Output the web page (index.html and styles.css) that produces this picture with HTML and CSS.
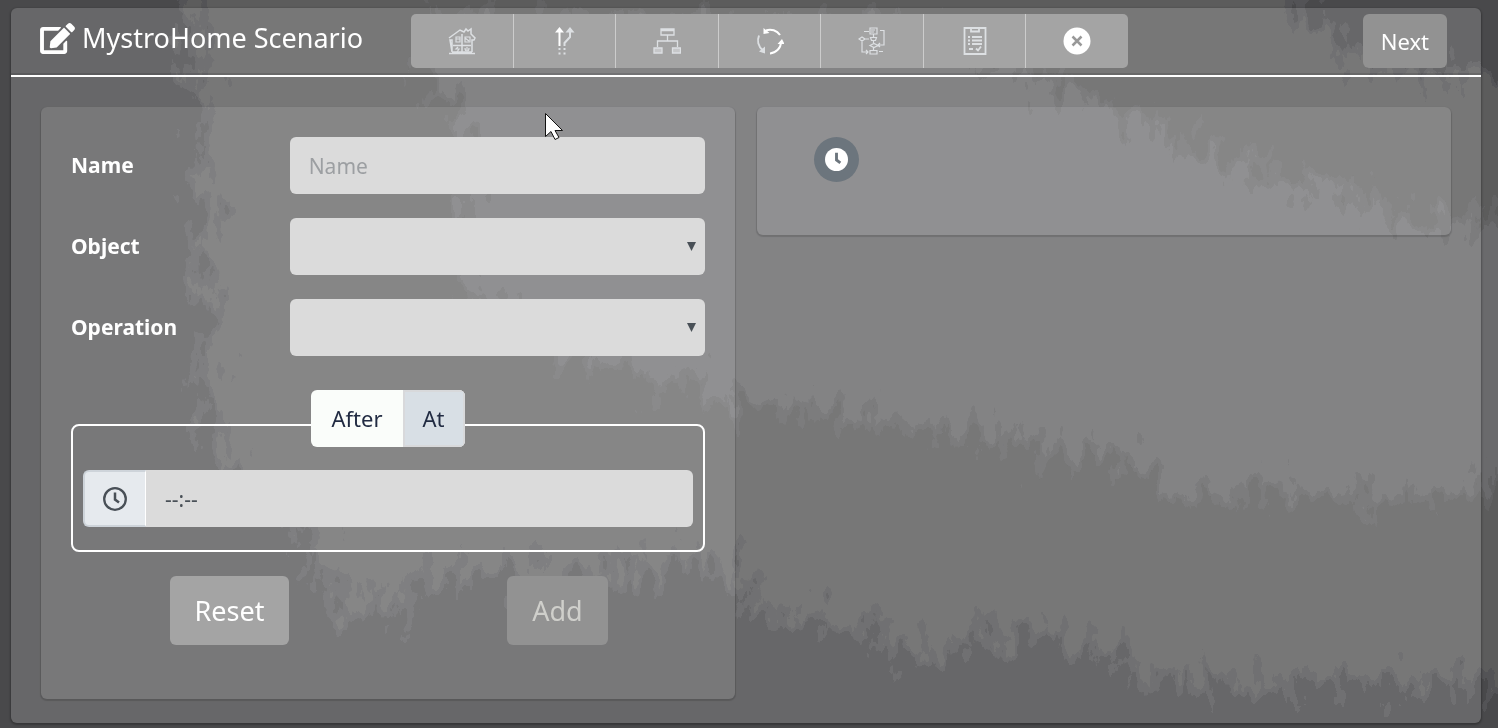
FILE: index.html
```html
<!DOCTYPE html>
<html lang="en">
<head>
<meta charset="utf-8">
<title>MystroHome Scenario</title>
<link rel="stylesheet" href="styles.css">
</head>
<body>
<svg class="backdrop" viewBox="0 0 1498 728" preserveAspectRatio="none" aria-hidden="true">
  <defs>
    <filter id="ragged" x="-5%" y="-5%" width="110%" height="110%">
      <feTurbulence type="fractalNoise" baseFrequency="0.06 0.03" numOctaves="4" seed="7" result="n"/>
      <feDisplacementMap in="SourceGraphic" in2="n" scale="90" xChannelSelector="R" yChannelSelector="G"/>
    </filter>
  </defs>
  <rect width="1498" height="728" fill="#49494b"/>
  <g filter="url(#ragged)" stroke-width="14">
    <path fill="#5b5b5b" stroke="#535356" d="M185-60 200 100 208 240 205 400 235 490 310 525 335 610 400 615 425 575 560 575 720 560 760 610 860 625 920 660 1000 632 1090 645 1150 680 1250 685 1560 685V75H1440L1370 60 1320 30 1270-60Z"/>
    <path fill="#6a6a6c" stroke="#626264" d="M465 110 430 90 440 25 900 30 1050 80 1130 115 1200 150 1320 190 1450 225 1560 200V480L1380 500 1290 490 1180 500 1140 465 1060 450 980 435 860 415 740 410 690 385 610 370 530 330 465 290Z"/>
  </g>
</svg>

<div class="shell">
  <header class="bar">
    <h1 class="title">
      <svg class="edit" viewBox="0 0 576 512" aria-hidden="true"><path fill="currentColor" d="M402.600 83.200l90.200 90.200c3.800 3.800 3.800 10 0 13.800L274.400 405.600l-92.800 10.300c-12.400 1.400-22.900-9.100-21.500-21.500l10.300-92.800L388.800 83.200c3.800-3.800 10-3.800 13.800 0zm162-22.900l-48.800-48.800c-15.200-15.200-39.900-15.200-55.200 0l-35.400 35.400c-3.800 3.800-3.800 10 0 13.800l90.200 90.200c3.800 3.800 10 3.800 13.800 0l35.400-35.400c15.200-15.300 15.200-40 0-55.200zM384 346.200V448H64V128h229.800c3.200 0 6.200-1.300 8.500-3.500l40-40c7.600-7.600 2.200-20.500-8.500-20.500H48C21.500 64 0 85.500 0 112v352c0 26.500 21.500 48 48 48h352c26.500 0 48-21.500 48-48V306.200c0-10.700-12.900-16-20.500-8.500l-40 40c-2.200 2.300-3.500 5.300-3.500 8.500z"/></svg>
      MystroHome Scenario
    </h1>
    <div class="tools" role="toolbar" aria-label="Scenario tools">
      <button class="tool" type="button" aria-label="Home">
        <svg viewBox="0 0 28 28" fill="none" stroke="currentColor"><path d="M1 11 12 3l4 2 2-3 2 2 3-2v5l4 4-1 2h-2v12M4 25V13H2zM1 26.500h26M4 25h20M14 7v18M5 18.500h18" stroke-width="1.500"/><path d="M8 10h4v5H8zM8 12h4M17 10h5v5h-5zM17 11l4 3M10 20l-2 2h3l-2 3M19 20v3M17 21c0 4 4 4 4 0" stroke-width="1.200"/></svg>
      </button>
      <button class="tool" type="button" aria-label="Paths">
        <svg viewBox="0 0 28 28" fill="none" stroke="currentColor" stroke-width="2"><path stroke="#fff" d="M9.500 19V3"/><path d="M14.500 19v-3l5.500-6V3"/><path fill="#fff" stroke="none" d="M5 5.500 9.500 0 14 5.500z"/><path fill="currentColor" stroke="none" d="M15.500 5.500 20 0 24.500 5.500zM8.500 21h2v2h-2zM13.500 21h2v2h-2zM8.500 25.500h2v2h-2zM13.500 25.500h2v2h-2z"/></svg>
      </button>
      <button class="tool" type="button" aria-label="Hierarchy">
        <svg viewBox="0 0 28 28" fill="none" stroke="currentColor" stroke-width="1.300"><path d="M8 2h13v6H8zM8 3.500h13M14.500 8v6M4.500 20v-6h20v6"/><path fill="currentColor" fill-opacity=".6" d="M1 21h8v5H1zM19.500 21h8v5h-8z"/></svg>
      </button>
      <button class="tool" type="button" aria-label="Cycle">
        <svg viewBox="0 0 28 28" fill="none" stroke="currentColor" stroke-width="2"><path stroke="#fff" d="M10 3.500c5-2 11 0 14 4.500M25 15c0 6-5 11-11 11.500"/><path d="M3 8.500c-2 5-1 11 4 15"/><path fill="#fff" stroke="none" d="M7.500 1v6l6-1zM21.500 17 26 12l2.500 5z"/><path fill="currentColor" stroke="none" d="M3 24.500l6-5v7z"/></svg>
      </button>
      <button class="tool" type="button" aria-label="Workflow">
        <svg viewBox="0 0 28 28" fill="none" stroke="currentColor" stroke-width="1.200"><path d="M12 1h7v6h-7zM13 3h4M13 5h3M6 4.500h5M22 3.500h4V18h-6M15.500 7v4M1 12l3-2 3 2-3 2zM7 12h4M12.500 10.500h6l-1 3h-4zM15.500 14v2M12 18.500l4-2 4 2-4 2zM4 14v11h6M12 23.500h7v3.500h-7zM15.500 20.500v3M21 24.500h4M8 23l2 2-2 2M22 16l-2 2 2 2"/></svg>
      </button>
      <button class="tool" type="button" aria-label="Checklist">
        <svg viewBox="0 0 28 28" fill="none" stroke="currentColor" stroke-width="1.800"><path d="M3.500 1h21v26h-21z"/><path d="M10 1v3.500h8V1M7 10h2M11 10h10M7 13.500h2M11 13.500h10M7 17h2M11 17h10M8 22h4M15 21.500l2 2 3-4"/></svg>
      </button>
      <button class="tool" type="button" aria-label="Close">
        <svg class="close" viewBox="0 0 28 28"><circle cx="14" cy="14" r="13.500" fill="currentColor"/><path d="M9.500 9.500l9 9M18.500 9.500l-9 9" stroke="#999" stroke-width="2.500"/></svg>
      </button>
    </div>
    <button class="btn next" type="button">Next</button>
  </header>

  <main class="content">
    <form class="panel form">
      <div class="row">
        <label class="label" for="name">Name</label>
        <input class="control" id="name" type="text" placeholder="Name">
      </div>
      <div class="row">
        <label class="label" for="object">Object</label>
        <div class="pick">
          <select class="control" id="object"><option></option></select>
          <svg class="arrow" viewBox="0 0 9 9" aria-hidden="true"><path d="M0 0h9L4.500 9z" fill="currentColor"/></svg>
        </div>
      </div>
      <div class="row">
        <label class="label" for="operation">Operation</label>
        <div class="pick">
          <select class="control" id="operation"><option></option></select>
          <svg class="arrow" viewBox="0 0 9 9" aria-hidden="true"><path d="M0 0h9L4.500 9z" fill="currentColor"/></svg>
        </div>
      </div>

      <div class="timing" role="group" aria-label="Timing">
        <div class="toggle">
          <input class="choice" type="radio" name="when" id="after"><label class="option" for="after">After</label>
          <input class="choice" type="radio" name="when" id="at" checked><label class="option" for="at">At</label>
        </div>
        <div class="group">
          <label class="addon" for="time" aria-label="Time">
            <svg viewBox="0 0 24 24" fill="none" stroke="currentColor"><circle cx="12" cy="12" r="10.800" stroke-width="2.300"/><path d="M12 5.500v7l4 3" stroke-width="2.500"/></svg>
          </label>
          <input class="control time" id="time" type="text" value="--:--">
        </div>
      </div>

      <div class="actions">
        <div class="slot"><button class="btn large" type="reset">Reset</button></div>
        <div class="slot"><button class="btn large" type="submit" disabled>Add</button></div>
      </div>
    </form>

    <section class="panel timeline" aria-label="Timeline">
      <span class="marker">
        <svg viewBox="0 0 24 24" aria-hidden="true"><circle cx="12" cy="12" r="12" fill="#fff"/><path d="M12 5v7.500l4 3" fill="none" stroke="#6c757d" stroke-width="3"/></svg>
      </span>
    </section>
  </main>
</div>

<svg class="pointer" viewBox="0 0 18 27" aria-hidden="true"><path d="M.5.500v23l5.500-5 4 8 4-2-4-7h7.500z" fill="#fff" stroke="#111"/></svg>
</body>
</html>
```

FILE: styles.css
```css
* { box-sizing: border-box; }

body {
  margin: 0;
  min-height: 100vh;
  display: flex;
  padding: 8px 17px 5px 11px;
  background: #49494b;
  color: #fff;
  font-family: "Noto Sans", "Open Sans", sans-serif;
  font-size: 21px;
  line-height: 32px;
}

button, input, select { font: inherit; color: inherit; }

.backdrop {
  position: fixed;
  inset: 0;
  width: 100%;
  height: 100%;
  z-index: -1;
}

.shell {
  flex: 1;
  display: flex;
  flex-direction: column;
  border-radius: 6px;
  background: rgba(255, 255, 255, .17);
  box-shadow: 0 1px 2px 1px rgba(0, 0, 0, .25);
}

.bar {
  display: flex;
  align-items: center;
  gap: 48px;
  padding: 6px 34px 7px 29px;
  border-bottom: 2px solid #fff;
  box-shadow: inset 0 -2px 0 rgba(0, 0, 0, .12);
}

.title {
  display: flex;
  align-items: center;
  gap: 7px;
  margin: 0 0 6px;
  font-size: 27px;
  font-weight: 400;
  line-height: 36px;
  white-space: nowrap;
}

.edit { width: 35px; height: 31px; }

.tools {
  flex: 0 1 717px;
  display: flex;
  border-radius: 5px;
  overflow: hidden;
}

.tool {
  flex: 1;
  display: grid;
  place-items: center;
  height: 54px;
  padding: 0;
  border: 0;
  background: #a4a4a4;
  color: #dde0e3;
}

.tool + .tool { border-left: 1px solid #ccc; }
.tool svg { width: 28px; height: 28px; }
.tool .close { color: #fff; }

.btn {
  border: 0;
  border-radius: 6px;
  background: #a4a4a4;
  color: #fff;
}

.next {
  height: 54px;
  margin-left: auto;
  padding: 0 18px;
  background: #929292;
  font-size: 22px;
}

.content {
  flex: 1;
  display: grid;
  grid-template-columns: 1fr 1fr;
  align-items: start;
  gap: 22px;
  padding: 30px 30px 24px;
}

.panel {
  border-radius: 6px;
  background: rgba(255, 255, 255, .11);
  box-shadow: 0 1px 1px 1px rgba(0, 0, 0, .14);
}

.form {
  display: flex;
  flex-direction: column;
  gap: 24px;
  padding: 30px 30px 54px;
}

.row {
  display: grid;
  grid-template-columns: calc((100% + 22px) / 3) 1fr;
  align-items: center;
}

.label {
  padding-bottom: 2px;
  font-weight: 700;
}

.control {
  display: block;
  width: 100%;
  height: 57px;
  padding: 0 19px;
  border: 0;
  border-radius: 6px;
  background: #dbdbdb;
  color: #495057;
  appearance: none;
}

.control::placeholder { color: #9c9fa2; opacity: 1; }

.pick { position: relative; }

.arrow {
  position: absolute;
  right: 9px;
  top: 24px;
  width: 9px;
  height: 9px;
  color: #495057;
  pointer-events: none;
}

.timing {
  margin-top: 44px;
  padding: 0 10px 23px;
  border: 2px solid #fff;
  border-radius: 8px;
}

.toggle {
  display: flex;
  width: max-content;
  margin: -36px auto 23px;
  border-radius: 6px;
  overflow: hidden;
  background: #fafdfa;
  color: #212b42;
  font-size: 22px;
}

.choice {
  position: absolute;
  opacity: 0;
  pointer-events: none;
}

.option {
  height: 57px;
  padding: 0 20px;
  line-height: 57px;
}

.choice:checked + .option {
  background: #d8dfe5;
  box-shadow: inset 0 0 0 2px #d8d9db;
}

.group { display: flex; }

.addon {
  flex: none;
  display: grid;
  place-items: center;
  width: 63px;
  border: 2px solid #ced4da;
  border-right: 1px solid #fff;
  border-radius: 6px 0 0 6px;
  background: #e6eaee;
  color: #495057;
}

.addon svg { width: 24px; height: 24px; }

.time {
  flex: 1;
  border-radius: 0 6px 6px 0;
}

.actions {
  display: grid;
  grid-template-columns: 1fr 1fr;
}

.slot { text-align: center; }
.slot + .slot { padding-left: 22px; }

.large {
  height: 69px;
  padding: 0 25px;
  font-size: 27px;
}

.large:disabled {
  background: #929292;
  color: #cfcfcb;
}

.timeline { padding: 30px 57px 53px; }

.marker {
  display: grid;
  place-items: center;
  width: 45px;
  height: 45px;
  border-radius: 50%;
  background: #6c757d;
}

.marker svg { width: 23px; height: 23px; }

.pointer {
  position: absolute;
  left: 545px;
  top: 113px;
  width: 18px;
  height: 27px;
  pointer-events: none;
}
```
